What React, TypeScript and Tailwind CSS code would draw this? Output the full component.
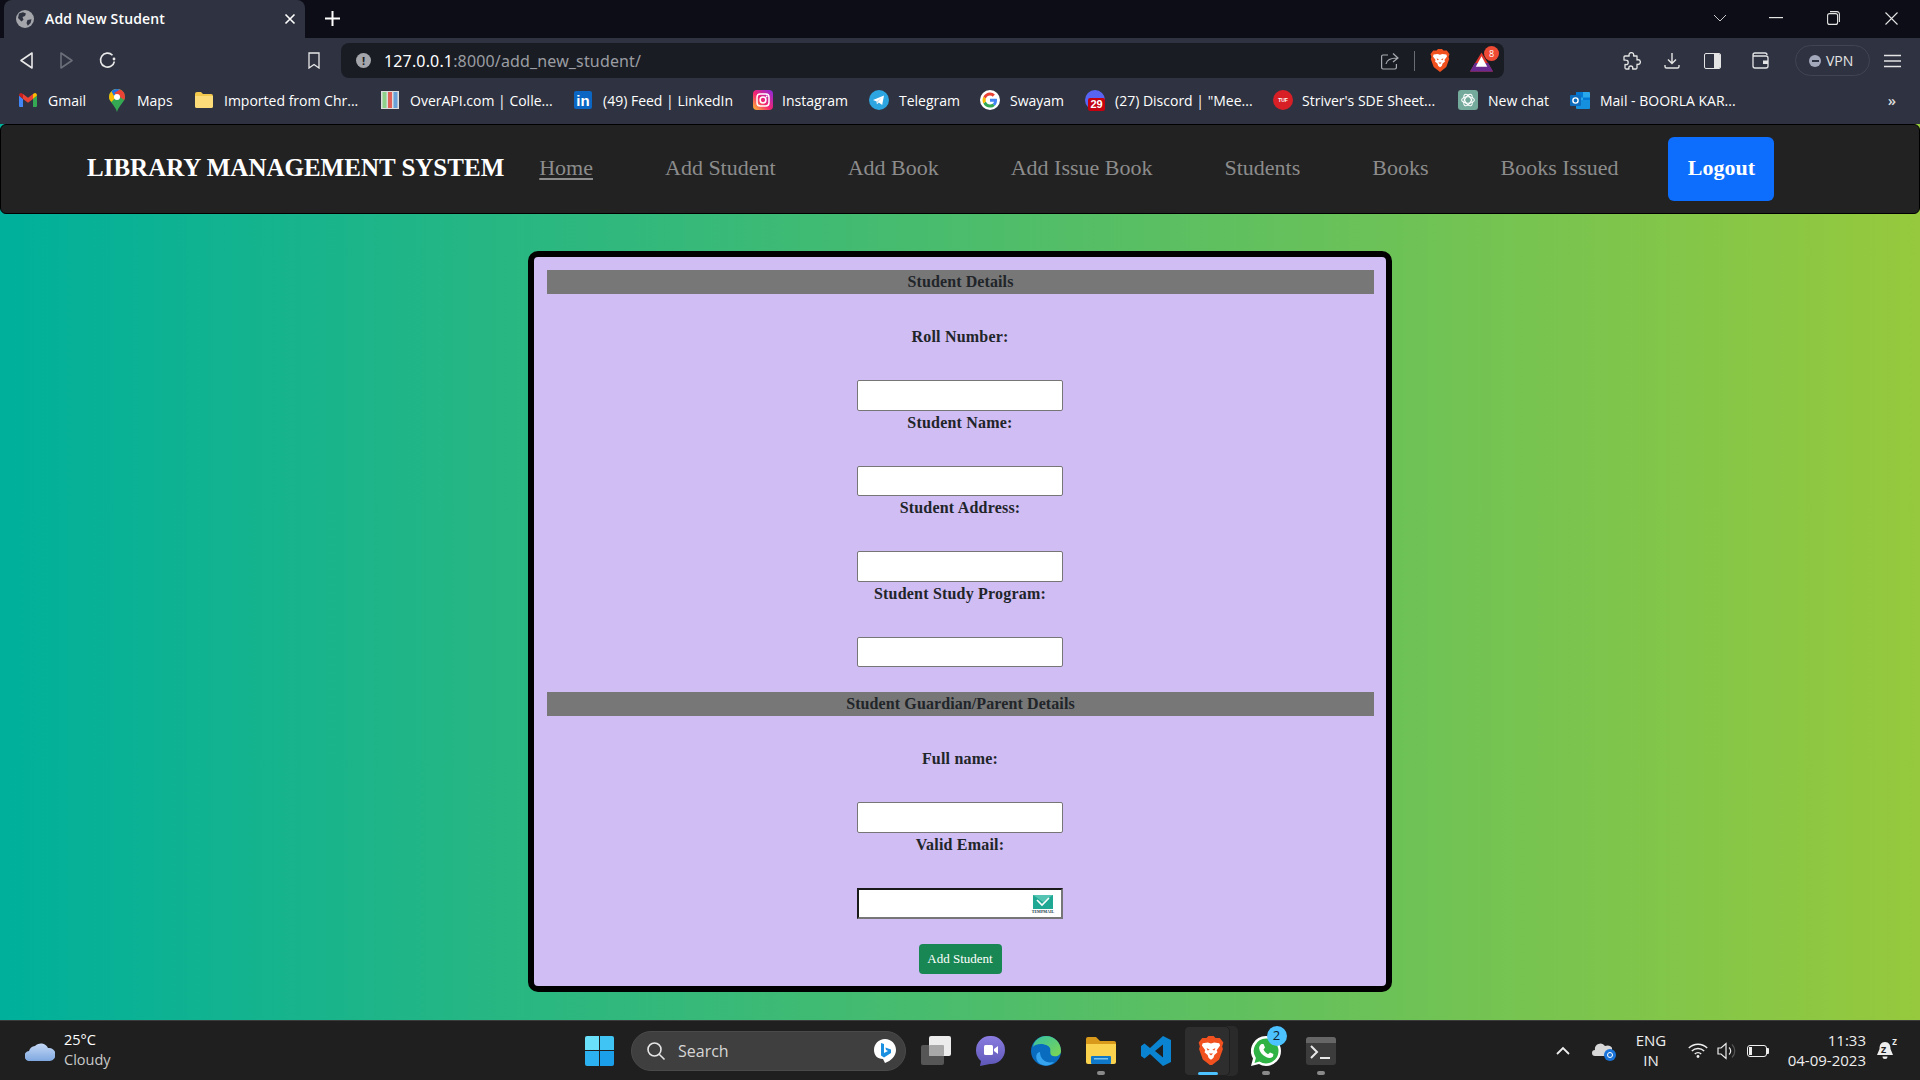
import React from "react";

const uiFont = "font-['Open_Sans',sans-serif]";

const Gmail = () => (
  <svg width="18" height="14" viewBox="0 0 18 14">
    <path d="M0 2.5 V13 a1 1 0 0 0 1 1 H4 V6 Z" fill="#4285f4" />
    <path d="M18 2.5 V13 a1 1 0 0 1 -1 1 H14 V6 Z" fill="#34a853" />
    <path d="M4 6 L9 9.8 L14 6 V1 L9 4.8 L4 1 Z" fill="#ea4335" />
    <path d="M0 2.5 L4 6 V1 L2.6 0.2 C1.3 -0.4 0 0.8 0 2.5 Z" fill="#c5221f" />
    <path d="M18 2.5 L14 6 V1 L15.4 0.2 C16.7 -0.4 18 0.8 18 2.5 Z" fill="#fbbc04" />
  </svg>
);

const Maps = () => (
  <svg width="16" height="23" viewBox="0 0 16 23">
    <path d="M8 0 A8 8 0 0 1 16 8 C16 13 10 16 8 23 C6 16 0 13 0 8 A8 8 0 0 1 8 0 Z" fill="#34a853" />
    <path d="M2.4 2.3 A8 8 0 0 1 8 0 A8 8 0 0 1 13 1.8 L2.4 13 C1 11.5 0 10 0 8 A8 8 0 0 1 2.4 2.3 Z" fill="#fbbc04" />
    <path d="M2.4 2.3 A8 8 0 0 1 8 0 C9 0 10 .2 11 .6 L5 7 Z" fill="#1a73e8" />
    <path d="M11 .6 A8 8 0 0 1 16 8 C16 9 15.7 10 15.3 11 L5 4 Z" fill="#ea4335" />
    <circle cx="8" cy="8" r="3" fill="#fff" />
  </svg>
);

const Folder = () => (
  <svg width="18" height="16" viewBox="0 0 18 16">
    <path d="M0 2 a2 2 0 0 1 2 -2 H6 L8 2 H16 a2 2 0 0 1 2 2 V14 a2 2 0 0 1 -2 2 H2 a2 2 0 0 1 -2 -2 Z" fill="#f2c94c" />
    <path d="M0 4 H18 V14 a2 2 0 0 1 -2 2 H2 a2 2 0 0 1 -2 -2 Z" fill="#fbdc79" />
  </svg>
);

const OverApi = () => (
  <svg width="18" height="18" viewBox="0 0 18 18">
    <rect x="0" y="0" width="18" height="18" fill="#ddd" />
    <rect x="1.5" y="1" width="4" height="16" fill="#8fd18a" />
    <rect x="7" y="1" width="4" height="16" fill="#e0605a" />
    <rect x="12.5" y="1" width="4" height="16" fill="#6aa0d8" />
  </svg>
);

const Instagram = () => (
  <svg width="20" height="20" viewBox="0 0 20 20">
    <defs>
      <linearGradient id="ig" x1="0" y1="1" x2="1" y2="0">
        <stop offset="0" stopColor="#fdc02f" />
        <stop offset="0.45" stopColor="#f5246f" />
        <stop offset="1" stopColor="#8a2be2" />
      </linearGradient>
    </defs>
    <rect width="20" height="20" rx="4" fill="url(#ig)" />
    <rect x="4" y="4" width="12" height="12" rx="3.2" fill="none" stroke="#fff" strokeWidth="1.5" />
    <circle cx="10" cy="10" r="2.9" fill="none" stroke="#fff" strokeWidth="1.5" />
    <circle cx="13.6" cy="6.4" r="0.9" fill="#fff" />
  </svg>
);

const Telegram = () => (
  <svg width="20" height="20" viewBox="0 0 20 20">
    <circle cx="10" cy="10" r="10" fill="#2ca5e0" />
    <path d="M4 10 L15 5.5 L13.2 15 L9.8 12.6 L8 14.3 L7.6 11.4 Z" fill="#fff" />
    <path d="M7.6 11.4 L13 7.5 L9 12 L8 14.3 Z" fill="#c8daea" />
  </svg>
);

const Google = () => (
  <svg width="20" height="20" viewBox="0 0 20 20">
    <circle cx="10" cy="10" r="10" fill="#fff" />
    <g transform="translate(10 10) scale(1.25) translate(-10 -10)">
      <path d="M15.6 10.2 c0 -.5 0 -.9 -.1 -1.3 H10 v2.4 h3.2 c-.2 .8 -.6 1.4 -1.2 1.8 l1.9 1.5 c1.1 -1 1.7 -2.5 1.7 -4.4 Z" fill="#4285f4" />
      <path d="M10 16 c1.6 0 3 -.5 3.9 -1.5 L12 13 c-.5 .4 -1.2 .6 -2 .6 -1.5 0 -2.8 -1 -3.3 -2.4 l-2 1.5 C5.7 14.7 7.7 16 10 16 Z" fill="#34a853" />
      <path d="M6.7 11.2 c-.2 -.8 -.2 -1.6 0 -2.4 l-2 -1.5 c-.9 1.7 -.9 3.7 0 5.4 Z" fill="#fbbc04" />
      <path d="M10 6.4 c.9 0 1.6 .3 2.2 .9 l1.7 -1.7 C12.9 4.6 11.5 4 10 4 7.7 4 5.7 5.3 4.7 7.3 l2 1.5 C7.2 7.4 8.5 6.4 10 6.4 Z" fill="#ea4335" />
    </g>
  </svg>
);

const Discord = () => (
  <div className="relative h-[20px] w-[20px]">
    <div className="absolute left-0 top-0 h-[20px] w-[20px] rounded-full bg-[#5865f2]" />
    <div className="absolute bottom-[-1px] left-[3px] h-[13px] w-[17px] rounded-[2px] bg-[#c5000f] text-center font-['Liberation_Sans',sans-serif] text-[11px] font-bold leading-[13px] text-white">
      29
    </div>
  </div>
);

const Striver = () => (
  <div className="flex h-[20px] w-[20px] items-center justify-center rounded-full bg-[#d81f26] font-['Liberation_Sans',sans-serif] text-[5px] font-bold leading-none text-white">
    TUF
  </div>
);

const ChatGpt = () => (
  <svg width="20" height="20" viewBox="0 0 20 20">
    <rect width="20" height="20" rx="3" fill="#74aa9c" />
    <g fill="none" stroke="#fff" strokeWidth="1.1">
      <ellipse cx="10" cy="10" rx="6.3" ry="3.2" />
      <ellipse cx="10" cy="10" rx="6.3" ry="3.2" transform="rotate(60 10 10)" />
      <ellipse cx="10" cy="10" rx="6.3" ry="3.2" transform="rotate(120 10 10)" />
    </g>
  </svg>
);

const Outlook = () => (
  <svg width="20" height="20" viewBox="0 0 20 20">
    <rect x="6" y="2" width="14" height="16" rx="1" fill="#28a8ea" />
    <rect x="6" y="2" width="7" height="5.5" fill="#0078d4" />
    <rect x="13" y="7.5" width="7" height="5.5" fill="#0078d4" />
    <path d="M6 10 L20 10 V18 a1 1 0 0 1 -1 1 H7 a1 1 0 0 1 -1 -1 Z" fill="#1490df" />
    <rect x="0" y="5" width="11" height="11" rx="1" fill="#0f6cbd" />
    <circle cx="5.5" cy="10.5" r="2.6" fill="none" stroke="#fff" strokeWidth="1.4" />
  </svg>
);

const Linkedin = () => (
  <div className="flex h-[18px] w-[18px] items-end justify-center rounded-[2px] bg-[#0a66c2] font-['Liberation_Sans',sans-serif] text-[15px] font-bold leading-[16px] text-white">
    in
  </div>
);

const BraveLion = ({ size = 20 }: { size?: number }) => (
  <svg width={size} height={size * 1.15} viewBox="0 0 20 23">
    <path d="M3.2 1.5 L6.5 1.5 L8 0 H12 L13.5 1.5 H16.8 L19.5 5 L18.6 8 L19.2 10 L16.3 18 L10 23 L3.7 18 L0.8 10 L1.4 8 L0.5 5 Z" fill="#f1501f" />
    <path d="M3.6 5.6 L7.6 5 L10 5.8 L12.4 5 L16.4 5.6 L17 7.4 L14.4 11 L15 12.6 L12.6 14.6 L11.8 17 L10 18.2 L8.2 17 L7.4 14.6 L5 12.6 L5.6 11 L3 7.4 Z" fill="#fff" />
    <path d="M6.6 9.2 L9 10.6 L7.4 11.2 Z M13.4 9.2 L11 10.6 L12.6 11.2 Z" fill="#f1501f" />
    <path d="M8.4 13.4 H11.6 L10 15 Z" fill="#f1501f" />
  </svg>
);

const bookmarks = [
  { icon: <Gmail />, label: "Gmail", box: "ml-[19px] w-[18px]", text: "ml-[11px] w-[37px]" },
  { icon: <Maps />, label: "Maps", box: "ml-[24px] w-[16px]", text: "ml-[12px] w-[35px]" },
  { icon: <Folder />, label: "Imported from Chr...", box: "ml-[23px] w-[18px]", text: "ml-[11px] w-[135px]" },
  { icon: <OverApi />, label: "OverAPI.com | Colle...", box: "ml-[22px] w-[18px]", text: "ml-[11px] w-[141px]" },
  { icon: <Linkedin />, label: "(49) Feed | LinkedIn", box: "ml-[23px] w-[18px]", text: "ml-[11px] w-[129px]" },
  { icon: <Instagram />, label: "Instagram", box: "ml-[21px] w-[20px]", text: "ml-[9px] w-[67px]" },
  { icon: <Telegram />, label: "Telegram", box: "ml-[20px] w-[20px]", text: "ml-[10px] w-[60px]" },
  { icon: <Google />, label: "Swayam", box: "ml-[21px] w-[20px]", text: "ml-[10px] w-[54px]" },
  { icon: <Discord />, label: '(27) Discord | "Mee...', box: "ml-[21px] w-[20px]", text: "ml-[10px] w-[137px]" },
  { icon: <Striver />, label: "Striver's SDE Sheet...", box: "ml-[21px] w-[20px]", text: "ml-[9px] w-[135px]" },
  { icon: <ChatGpt />, label: "New chat", box: "ml-[21px] w-[20px]", text: "ml-[10px] w-[62px]" },
  { icon: <Outlook />, label: "Mail - BOORLA KAR...", box: "ml-[20px] w-[20px]", text: "ml-[10px] w-[143px]" },
];

const TabBar = () => (
  <div className="flex h-[38px] items-end bg-[#0c0d16]">
    <div className="ml-[4px] flex h-[38px] w-[301px] items-center rounded-t-[8px] bg-[#2f3341] pb-[1px] pl-[12px] pr-[9px]">
      <svg width="18" height="18" viewBox="0 0 18 18">
        <circle cx="9" cy="9" r="9" fill="#a4a6ab" />
        <path d="M3 3.5 L7 2.2 L10 3.6 L9 6 L6.5 7 L7.5 9.8 L5.5 11.5 L2 8 Z M11.5 10 L15.5 9.2 L14.6 13 L11.8 15.8 L10.5 13 Z" fill="#2f3341" />
      </svg>
      <span className={`ml-[11px] flex-1 text-[14px] font-semibold tracking-[0.15px] text-white ${uiFont}`}>Add New Student</span>
      <svg width="12" height="12" viewBox="0 0 12 12" stroke="#fff" strokeWidth="1.6">
        <path d="M1.5 1.5 L10.5 10.5 M10.5 1.5 L1.5 10.5" />
      </svg>
    </div>
    <svg className="mb-[12px] ml-[20px]" width="15" height="15" viewBox="0 0 15 15" stroke="#fff" strokeWidth="2">
      <path d="M7.5 0 V15 M0 7.5 H15" />
    </svg>
    <div className="mb-[13px] ml-auto flex items-center text-white">
      <svg width="14" height="8" viewBox="0 0 14 8" fill="none" stroke="#c8c8c8" strokeWidth="1">
        <path d="M1 1 L7 7 L13 1" />
      </svg>
      <svg className="ml-[42px]" width="14" height="2" viewBox="0 0 14 2" fill="#e4e4e4">
        <rect width="14" height="1.2" />
      </svg>
      <svg className="ml-[44px]" width="13" height="14" viewBox="0 0 13 14" fill="none" stroke="#e4e4e4" strokeWidth="1.1">
        <rect x="0.6" y="2.6" width="10" height="10.8" rx="2" />
        <path d="M3 .6 H10 a2.4 2.4 0 0 1 2.4 2.4 V11" />
      </svg>
      <svg className="ml-[45px] mr-[22px]" width="13" height="13" viewBox="0 0 13 13" stroke="#e4e4e4" strokeWidth="1.1">
        <path d="M0.5 0.5 L12.5 12.5 M12.5 0.5 L0.5 12.5" />
      </svg>
    </div>
  </div>
);

const ToolBar = () => (
  <div className="flex h-[40px] items-end bg-[#2f3341]">
    <div className="flex h-[35px] w-[341px] items-center">
      <svg className="ml-[20px]" width="13" height="17" viewBox="0 0 13 17" fill="none" stroke="#e8e8e8" strokeWidth="1.6" strokeLinejoin="round">
        <path d="M12 1 V16 L1 8.5 Z" />
      </svg>
      <svg className="ml-[27px]" width="13" height="17" viewBox="0 0 13 17" fill="none" stroke="#6c6f7a" strokeWidth="1.6" strokeLinejoin="round">
        <path d="M1 1 V16 L12 8.5 Z" />
      </svg>
      <svg className="ml-[26px]" width="17" height="17" viewBox="0 0 17 17" fill="none" stroke="#e8e8e8" strokeWidth="1.6">
        <path d="M13.5 3.2 A7 7 0 1 0 15.4 9.5" />
        <circle cx="15" cy="7" r="1.4" fill="#e8e8e8" stroke="none" />
      </svg>
      <svg className="ml-[192px]" width="12" height="17" viewBox="0 0 12 17" fill="none" stroke="#e8e8e8" strokeWidth="1.3">
        <path d="M1 1 H11 V16 L6 12.5 L1 16 Z" />
      </svg>
    </div>
    <div className="flex h-[35px] w-[1163px] items-center rounded-[8px] bg-[#191c23] pl-[15px]">
      <div className={`flex h-[15px] w-[15px] items-center justify-center rounded-full bg-[#a4a6ab] text-[11px] font-bold leading-none text-[#191c23] ${uiFont}`}>
        !
      </div>
      <div className="ml-[13px] font-['Noto_Sans',sans-serif] text-[16px] tracking-[0.15px] text-white">
        127.0.0.1<span className="text-[#9b9da2]">:8000/add_new_student/</span>
      </div>
      <svg className="ml-auto" width="18" height="18" viewBox="0 0 18 18" fill="none" stroke="#a9abb0" strokeWidth="1.2">
        <path d="M7 3 H2 a1.4 1.4 0 0 0 -1.4 1.4 V15.6 a1.4 1.4 0 0 0 1.4 1.4 H14 a1.4 1.4 0 0 0 1.4 -1.4 V12" />
        <path d="M5 12 C6 7 10 6 16 6 M12 1.5 L17 6 L12 10" />
      </svg>
      <div className="ml-[15px] h-[20px] w-[1px] bg-[#6a6c74]" />
      <div className="ml-[15px]">
        <BraveLion size={20} />
      </div>
      <div className="relative ml-[20px] mr-[11px] h-[22px] w-[23px]">
        <svg width="23" height="20" viewBox="0 0 24 20" className="absolute bottom-0 left-0">
          <path d="M12 0 L24 20 H0 Z" fill="#e0342b" />
          <path d="M0 20 L5 11 H19 L24 20 Z" fill="#6b2a8f" />
          <path d="M12 4 L18 15 H6 Z" fill="#fff" />
        </svg>
        <div className={`absolute right-[-6px] top-[-4px] flex h-[15px] w-[15px] items-center justify-center rounded-full bg-[#ee4a34] text-[9px] leading-none text-white ${uiFont}`}>
          8
        </div>
      </div>
    </div>
    <div className="flex h-[35px] flex-1 items-center">
      <svg className="ml-[119px]" width="18" height="18" viewBox="0 0 18 18" fill="none" stroke="#e4e4e4" strokeWidth="1.3" strokeLinejoin="round">
        <path d="M6 3 a2.4 2.4 0 0 1 4.8 0 L10.5 4 H14 V8 L15 7.7 a2.4 2.4 0 0 1 0 4.8 L14 12.2 V16 A1.2 1.2 0 0 1 13 17 H9.6 L9.8 16 a2 2 0 0 0 -4 0 L6 17 H3 A1.2 1.2 0 0 1 2 16 V12.5 L3 12.6 a2.2 2.2 0 0 0 0 -4.4 L1 8 V5 A1 1 0 0 1 2 4 H6.2 Z" />
      </svg>
      <svg className="ml-[23px]" width="16" height="17" viewBox="0 0 16 17" fill="none" stroke="#e4e4e4" strokeWidth="1.4">
        <path d="M8 1 V11 M4 7.5 L8 11.5 L12 7.5 M1 13 V14.5 A1.5 1.5 0 0 0 2.5 16 H13.5 A1.5 1.5 0 0 0 15 14.5 V13" />
      </svg>
      <div className="ml-[24px] flex h-[16px] w-[17px] overflow-hidden rounded-[2px] border-[1.5px] border-[#e4e4e4]">
        <div className="w-[9px]" />
        <div className="flex-1 bg-[#e4e4e4]" />
      </div>
      <svg className="ml-[31px]" width="17" height="17" viewBox="0 0 17 17" fill="none" stroke="#e4e4e4" strokeWidth="1.3">
        <path d="M1 4 V14 A2 2 0 0 0 3 16 H14 A2 2 0 0 0 16 14 V6 A2 2 0 0 0 14 4 H1 L1 3 A2 2 0 0 1 3 1 H13 A2 2 0 0 1 15 3" />
        <rect x="11" y="8.5" width="5" height="3.5" fill="#e4e4e4" stroke="none" />
      </svg>
      <div className={`ml-[26px] flex h-[31px] w-[75px] items-center rounded-full border border-[#404453] pl-[13px] text-[14px] text-[#e4e4e4] ${uiFont}`}>
        <span className="mr-[5px] flex h-[12px] w-[12px] items-center justify-center rounded-full bg-[#a4a8bb]">
          <span className="h-[2px] w-[7px] bg-[#2f3341]" />
        </span>
        VPN
      </div>
      <svg className="ml-[14px]" width="17" height="14" viewBox="0 0 17 14" stroke="#e4e4e4" strokeWidth="1.4">
        <path d="M0 1.5 H17 M0 7 H17 M0 12.5 H17" />
      </svg>
    </div>
  </div>
);

const BookmarkBar = () => (
  <div className={`flex h-[46px] items-center bg-[#2f3341] pb-[2px] text-[14px] text-white ${uiFont}`}>
    {bookmarks.map((b) => (
      <React.Fragment key={b.label}>
        <div className={`flex shrink-0 justify-center ${b.box}`}>{b.icon}</div>
        <div className={`shrink-0 whitespace-nowrap ${b.text}`}>{b.label}</div>
      </React.Fragment>
    ))}
    <span className="ml-auto mr-[24px] text-[15px] font-semibold text-[#ddd]">»</span>
  </div>
);

const navLinks = ["Add Student", "Add Book", "Add Issue Book", "Students", "Books", "Books Issued"];

const Navbar = () => (
  <nav className="flex h-[90px] items-center rounded-[6px] border border-black bg-[#222222] pl-[86px] font-['Liberation_Serif',serif] text-[22px] leading-[36px]">
    <a className="mb-[2px] mr-[35px] text-[25px] font-bold text-white">LIBRARY MANAGEMENT SYSTEM</a>
    <a className="mb-[2px] text-[#8c8c8c] underline decoration-[2px] underline-offset-[3px]">Home</a>
    {navLinks.map((l) => (
      <a key={l} className="mb-[2px] ml-[72px] text-[#8c8c8c]">
        {l}
      </a>
    ))}
    <button className="ml-[50px] flex h-[64px] w-[106px] items-center justify-center rounded-[6px] bg-[#0d6efd] pb-[2px] font-bold text-white">
      Logout
    </button>
  </nav>
);

const Field = ({ label, email }: { label: string; email?: boolean }) => (
  <div className="flex flex-col items-center">
    <div className="h-[24px] text-[16px] font-bold leading-[24px] tracking-[0.2px]">{label}</div>
    <div className="h-[31px]" />
    {email ? (
      <div className="relative h-[30.6px] w-[206px] border-2 border-b-[#767676] border-l-[#1a1a1a] border-r-[#767676] border-t-[#1a1a1a] bg-white">
        <div className="absolute right-[8px] top-[5px] flex w-[20px] flex-col items-center">
          <svg width="20" height="14" viewBox="0 0 20 14">
            <rect width="20" height="14" fill="#1fa894" />
            <path d="M0 0 L10 7 L20 0" fill="#55c4b2" />
            <path d="M4 5 L9 10 L16 3" fill="none" stroke="#fff" strokeWidth="1.6" />
          </svg>
          <span className="text-[4px] font-bold leading-[5px] text-[#173a4a]">TEMPMAIL</span>
        </div>
      </div>
    ) : (
      <div className="h-[30.6px] w-[206px] rounded-[2px] border border-[#767676] bg-white" />
    )}
  </div>
);

const SectionBar = ({ title }: { title: string }) => (
  <div className="mr-[-1px] h-[24px] bg-[#777777] text-center text-[16px] font-bold leading-[24px] tracking-[0.1px]">{title}</div>
);

const Card = () => (
  <div className="mt-[37px] h-[741px] w-[864px] rounded-[10px] border-[6px] border-black bg-[#d0bdf4] px-[13px] pt-[13px] font-['Liberation_Serif',serif] text-[#212529]">
    <SectionBar title="Student Details" />
    <div className="flex flex-col pt-[31px]">
      <Field label="Roll Number:" />
      <Field label="Student Name:" />
      <Field label="Student Address:" />
      <Field label="Student Study Program:" />
    </div>
    <div className="mt-[25px]">
      <SectionBar title="Student Guardian/Parent Details" />
    </div>
    <div className="flex flex-col pt-[31px]">
      <Field label="Full name:" />
      <Field label="Valid Email:" email />
    </div>
    <div className="mt-[25px] flex justify-center">
      <button className="h-[30px] w-[83px] rounded-[4px] bg-[#198754] text-[13px] text-white">Add Student</button>
    </div>
  </div>
);

const TaskIconBox = ({ children, active, dot }: { children: React.ReactNode; active?: boolean; dot?: boolean }) => (
  <div className="relative flex h-[50px] w-[55px] items-center justify-center">
    {active && <div className="absolute left-[8px] top-0 h-[50px] w-[47px] rounded-[5px] bg-[#2a2a2a]" />}
    {active && <div className="absolute left-[1px] top-0 h-[50px] w-[46px] rounded-[5px] border border-[#1f1f1f] bg-[#2e2e2e]" />}
    <div className="relative">{children}</div>
    {dot && <div className="absolute bottom-[1px] left-[24px] h-[4px] w-[8px] rounded-full bg-[#8a8a8a]" />}
    {active && <div className="absolute bottom-[1px] left-[15px] h-[3px] w-[20px] rounded-full bg-[#4cc2ff]" />}
  </div>
);

const Taskbar = () => (
  <div className={`flex h-[60px] items-center border-t border-[#3b3b3b] bg-[#1f1f1f] text-white ${uiFont}`}>
    <div className="flex w-[585px] shrink-0 items-center pl-[25px]">
      <svg width="30" height="20" viewBox="0 0 30 20">
        <defs>
          <linearGradient id="cl" x1="0" y1="0" x2="0" y2="1">
            <stop offset="0" stopColor="#c4d8f6" />
            <stop offset="1" stopColor="#7fa8e0" />
          </linearGradient>
        </defs>
        <path d="M5 20 A5 5 0 0 1 4 10 A7 7 0 0 1 10 5 A8 8 0 0 1 23 7 A6.5 6.5 0 0 1 25 20 Z" fill="url(#cl)" />
      </svg>
      <div className="mb-[2px] ml-[9px] text-[14.5px] leading-[20px]">
        <div>25°C</div>
        <div className="text-[#c9c9c9]">Cloudy</div>
      </div>
    </div>
    <div className="flex h-[30px] w-[29px] shrink-0 flex-wrap gap-[1px]">
      <div className="h-[14.5px] w-[14px] rounded-tl-[2px] bg-[#6be0fb]" />
      <div className="h-[14.5px] w-[14px] rounded-tr-[2px] bg-[#3fc4f4]" />
      <div className="h-[14.5px] w-[14px] rounded-bl-[2px] bg-[#2cb2f0]" />
      <div className="h-[14.5px] w-[14px] rounded-br-[2px] bg-[#1a9fe8]" />
    </div>
    <div className="ml-[17px] flex h-[40px] w-[275px] shrink-0 items-center rounded-full border border-[#4a4a4a] bg-[#3f3f3f] pl-[14px] pr-[8px]">
      <svg width="20" height="20" viewBox="0 0 20 20" fill="none" stroke="#e6e6e6" strokeWidth="1.6">
        <circle cx="8.5" cy="8.5" r="6.5" />
        <path d="M13.2 13.2 L18.5 18.5" />
      </svg>
      <span className="ml-[12px] text-[16px] text-[#d6d6d6]">Search</span>
      <svg className="ml-auto" width="24" height="26" viewBox="0 0 24 26">
        <path d="M12 1 C18.5 1 23 6 23 12 C23 18 18 23 12 25 L10 21 C4 21 1 17 1 12 C1 6 5.5 1 12 1 Z" fill="#fff" />
        <path d="M8 5 L11 6 V15 L15 13 L13 12 L12.4 9.5 L18 11.5 V15 L11 19.5 L8 17.5 Z" fill="#1b8fe0" />
      </svg>
    </div>
    <div className="ml-[2px] flex shrink-0 items-center">
      <TaskIconBox>
        <div className="relative h-[29px] w-[30px]">
          <div className="absolute bottom-0 left-0 h-[20px] w-[23px] rounded-[2px] bg-[#565656]" />
          <div className="absolute right-0 top-0 h-[20px] w-[22px] rounded-[2px] bg-[#ececec]" />
          <div className="absolute left-[8px] top-[9px] h-[11px] w-[15px] rounded-[1px] bg-[#a8a8a8]" />
        </div>
      </TaskIconBox>
      <TaskIconBox>
        <svg width="29" height="30" viewBox="0 0 29 30">
          <defs>
            <linearGradient id="tm" x1="0" y1="0" x2="0" y2="1">
              <stop offset="0" stopColor="#8a7ce0" />
              <stop offset="1" stopColor="#5d57b8" />
            </linearGradient>
          </defs>
          <path d="M14.5 0 A14 14 0 0 1 29 14 A14 14 0 0 1 14 28 L4 30 L5 25 A14 14 0 0 1 0 14 A14 14 0 0 1 14.5 0 Z" fill="url(#tm)" />
          <rect x="8" y="9" width="9" height="10" rx="1.5" fill="#fff" />
          <path d="M18 13 L22 10 V18 L18 15 Z" fill="#fff" />
        </svg>
      </TaskIconBox>
      <TaskIconBox>
        <svg width="30" height="30" viewBox="0 0 30 30">
          <defs>
            <linearGradient id="ed" x1="0" y1="0" x2="1" y2="1">
              <stop offset="0" stopColor="#35c1a4" />
              <stop offset="1" stopColor="#7fd650" />
            </linearGradient>
          </defs>
          <circle cx="15" cy="15" r="15" fill="#0a6cbf" />
          <path d="M2 11 C3 4 9 0 15 0 C24 0 30 7 30 15 C30 19 26 21 22 20 C18 19 20 15 19 12 C17 8 6 6 2 11 Z" fill="url(#ed)" />
          <path d="M9 16 C9 23 15 28 23 26 C19 31 10 30 7 26 C4 22 5 16 9 16 Z" fill="#36a4ee" />
        </svg>
      </TaskIconBox>
      <TaskIconBox dot>
        <svg width="30" height="27" viewBox="0 0 30 27">
          <path d="M0 2 A2 2 0 0 1 2 0 H10 L14 4 H28 A2 2 0 0 1 30 6 V10 H0 Z" fill="#d99a1c" />
          <path d="M0 7 H30 V25 A2 2 0 0 1 28 27 H2 A2 2 0 0 1 0 25 Z" fill="#fbd24e" />
          <rect x="5" y="19" width="20" height="8" rx="1" fill="#0f78c9" />
          <rect x="8" y="21" width="14" height="1.5" fill="#7cc4ee" />
        </svg>
      </TaskIconBox>
      <TaskIconBox>
        <svg width="30" height="30" viewBox="0 0 30 30">
          <path d="M22 0 L30 4 V26 L22 30 L9 18 L3.5 22.5 L0 20 V10 L3.5 7.5 L9 12 Z M22 8.5 L14 15 L22 21.5 Z" fill="#0a84d0" fillRule="evenodd" />
        </svg>
      </TaskIconBox>
      <TaskIconBox active>
        <BraveLion size={26} />
      </TaskIconBox>
      <TaskIconBox dot>
        <div className="relative">
          <svg width="30" height="30" viewBox="0 0 30 30">
            <path d="M15 0 A15 15 0 0 1 15 30 C12.5 30 10 29.3 8 28 L0 30 L2 22.5 A15 15 0 0 1 15 0 Z" fill="#fff" />
            <path d="M15 2.5 A12.5 12.5 0 0 1 15 27.5 C12.7 27.5 10.5 26.8 8.5 25.6 L3.5 27 L4.9 22 A12.5 12.5 0 0 1 15 2.5 Z" fill="#2fb344" />
            <path d="M10.5 8 L12.5 8 L14 11.5 L12.5 13.5 C13.5 15.8 15 17.2 17 18.2 L19 16.4 L22.4 18 L22 20.4 C20.5 22.2 18 22.4 15 21 C11 19 8.6 15.8 8.2 12.6 C8 10.6 9 9 10.5 8 Z" fill="#fff" />
          </svg>
          <div className="absolute right-[-6px] top-[-10px] flex h-[20px] w-[20px] items-center justify-center rounded-full bg-[#4cc2ff] text-[13px] leading-none text-[#10212c]">
            2
          </div>
        </div>
      </TaskIconBox>
      <TaskIconBox dot>
        <div className="h-[28px] w-[30px] rounded-[3px] bg-[#3c3c3c]">
          <div className="h-[6px] rounded-t-[3px] bg-[#666]" />
          <svg width="30" height="22" viewBox="0 0 30 22" fill="none" stroke="#e8e8e8" strokeWidth="2">
            <path d="M5 3 L11 9 L5 15 M14 15 H24" />
          </svg>
        </div>
      </TaskIconBox>
    </div>
    <div className="ml-auto flex shrink-0 items-center pr-[26px]">
      <svg width="14" height="9" viewBox="0 0 14 9" fill="none" stroke="#eee" strokeWidth="1.8">
        <path d="M1 8 L7 2 L13 8" />
      </svg>
      <div className="relative ml-[22px] h-[17px] w-[22px]">
        <svg width="20" height="14" viewBox="0 0 20 14" className="absolute left-0 top-0">
          <path d="M3 14 A3 3 0 0 1 3 8 A5.5 5.5 0 0 1 13 4 A5 5 0 0 1 18 14 Z" fill="#d8d8d8" />
        </svg>
        <div className="absolute bottom-[-2px] right-[-2px] flex h-[12px] w-[12px] items-center justify-center rounded-full bg-[#1a73d8]">
          <div className="h-[6px] w-[6px] rounded-full border border-white" />
        </div>
      </div>
      <div className="mb-[2px] ml-[20px] w-[34px] text-center text-[15px] leading-[20px] text-[#eee]">
        ENG
        <br />
        IN
      </div>
      <svg className="ml-[20px]" width="20" height="15" viewBox="0 0 20 15" fill="none" stroke="#eee" strokeWidth="1.4">
        <path d="M0.8 5 A13 13 0 0 1 19.2 5 M3.8 8 A9 9 0 0 1 16.2 8 M6.8 11 A4.5 4.5 0 0 1 13.2 11" />
        <circle cx="10" cy="13.5" r="1.4" fill="#eee" stroke="none" />
      </svg>
      <svg className="ml-[9px]" width="20" height="18" viewBox="0 0 20 18" fill="none" stroke="#eee" strokeWidth="1.2">
        <path d="M1 6 H4 L9 1.5 V16.5 L4 12 H1 Z M12 5.5 A4.5 4.5 0 0 1 12 12.5" />
        <path d="M15 2.5 A9 9 0 0 1 15 15.5" stroke="#555" />
      </svg>
      <div className="relative ml-[10px] h-[12px] w-[20px] rounded-[3px] border border-[#eee]">
        <div className="absolute bottom-[1px] left-[1px] top-[1px] w-[3px] bg-[#eee]" />
        <div className="absolute right-[-3px] top-[2px] h-[6px] w-[2px] rounded-r-[1px] bg-[#eee]" />
      </div>
      <div className="mb-[2px] ml-[11px] w-[88px] text-right text-[15px] leading-[20px] text-[#eee]">
        <div>11:33</div>
        <div>04-09-2023</div>
      </div>
      <div className="relative ml-[11px] h-[18px] w-[17px]">
        <svg width="16" height="18" viewBox="0 0 16 18" className="absolute bottom-0 left-0">
          <path d="M8 0 C12 0 13.5 3 13.5 7 L16 13 H0 L2.5 7 C2.5 3 4 0 8 0 Z M5.5 14.5 H10.5 A2.5 2.5 0 0 1 5.5 14.5 Z" fill="#eee" />
        </svg>
        <span className="absolute left-[4px] top-[3px] text-[9px] font-bold leading-none text-[#1f1f1f]">Z</span>
        <span className="absolute right-[-3px] top-[-4px] text-[8px] font-bold leading-none text-[#eee]">Z</span>
      </div>
    </div>
  </div>
);

export default function App() {
  return (
    <div className="flex h-[1080px] w-[1920px] flex-col overflow-hidden bg-[linear-gradient(to_right,#00b09b,#96c93d)]">
      <TabBar />
      <ToolBar />
      <BookmarkBar />
      <Navbar />
      <main className="flex flex-1 flex-col items-center">
        <Card />
      </main>
      <Taskbar />
    </div>
  );
}
